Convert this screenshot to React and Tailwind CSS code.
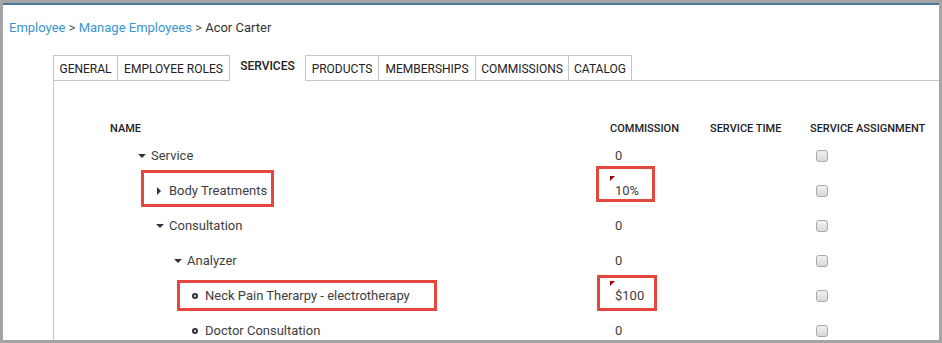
import React from "react";

const tabs = [
  { label: "GENERAL", w: "w-[64px]" },
  { label: "EMPLOYEE ROLES", w: "w-[112px]" },
  { label: "SERVICES", w: "w-[76px]", active: true },
  { label: "PRODUCTS", w: "w-[73px]" },
  { label: "MEMBERSHIPS", w: "w-[97px]" },
  { label: "COMMISSIONS", w: "w-[93px]" },
  { label: "CATALOG", w: "w-[64px]", last: true },
];

const rows = [
  { name: "Service", level: 0, icon: "down", commission: "0" },
  { name: "Body Treatments", level: 1, icon: "right", commission: "10%", flag: true },
  { name: "Consultation", level: 1, icon: "down", commission: "0" },
  { name: "Analyzer", level: 2, icon: "down", commission: "0" },
  { name: "Neck Pain Therarpy - electrotherapy", level: 3, icon: "dot", commission: "$100", flag: true },
  { name: "Doctor Consultation", level: 3, icon: "dot", commission: "0" },
];

const indents = ["ml-[28px]", "ml-[46px]", "ml-[64px]", "ml-[82px]"];

const TreeIcon = ({ type }) => {
  if (type === "down") {
    return (
      <span className="w-0 h-0 border-l-[4px] border-r-[4px] border-t-[4px] border-l-transparent border-r-transparent border-t-[#333]" />
    );
  }
  if (type === "right") {
    return (
      <span className="ml-[1px] w-0 h-0 border-t-[4px] border-b-[4px] border-l-[4px] border-t-transparent border-b-transparent border-l-[#333]" />
    );
  }
  return <span className="w-[6px] h-[6px] rounded-full border-[2px] border-[#333]" />;
};

const Checkbox = () => (
  <span className="block w-[12px] h-[12px] rounded-[3px] border border-[#a8a8a8] bg-gradient-to-b from-[#f2f2f2] to-[#d9d9d9]" />
);

const App = () => {
  return (
    <div
      className="relative w-[942px] h-[343px] overflow-hidden bg-[#a4a4a4] pt-[3px] pl-[3px] pr-[3px] pb-[3px]"
      style={{ fontFamily: "Roboto, 'Liberation Sans', sans-serif" }}
    >
      <div className="h-[337px] bg-white border-t-2 border-[#477a98] overflow-hidden">
        <div className="pt-[15px] pl-[6px] text-[13px] leading-[16px]">
          <span className="text-[#3a96cf]">Employee</span>
          <span className="text-[#555]"> &gt; </span>
          <span className="text-[#3a96cf]">Manage Employees</span>
          <span className="text-[#555]"> &gt; </span>
          <span className="text-[#333]">Acor Carter</span>
        </div>

        <div className="ml-[50px] mt-[19px] flex border-b border-[#c6c6c6]">
          {tabs.map((t) => (
            <div
              key={t.label}
              className={`${t.w} h-[26px] -mb-[1px] flex items-center justify-center text-[12px] text-[#222] border-l border-[#c6c6c6] ${
                t.active ? "bg-white pb-[4px] font-medium" : "border-t pt-[1px]"
              } ${t.last ? "border-r" : ""}`}
            >
              {t.label}
            </div>
          ))}
        </div>

        <div className="ml-[50px] h-[260px] border-l border-[#c6c6c6] pt-[39px] pl-[56px]">
          <div className="flex h-[18px] items-center text-[11px] font-medium text-[#222]">
            <div className="w-[500px]">NAME</div>
            <div className="w-[100px]">COMMISSION</div>
            <div className="w-[100px]">SERVICE TIME</div>
            <div>SERVICE ASSIGNMENT</div>
          </div>
          {rows.map((r) => (
            <div key={r.name} className="flex h-[35px] items-center text-[13px] text-[#3e3e3e]">
              <div className="w-[500px] flex items-center">
                <span className={`${indents[r.level]} w-[13px] flex items-center`}>
                  <TreeIcon type={r.icon} />
                </span>
                <span>{r.name}</span>
              </div>
              <div className="relative w-[100px] pl-[5px]">
                {r.flag && (
                  <span className="absolute left-0 -top-[5px] w-0 h-0 border-t-[5px] border-r-[5px] border-t-[#a40000] border-r-transparent" />
                )}
                {r.commission}
              </div>
              <div className="w-[100px]" />
              <div className="pl-[6px]">
                <Checkbox />
              </div>
            </div>
          ))}
        </div>
      </div>

      {/* annotation boxes */}
      <div className="absolute left-[141px] top-[170px] w-[133px] h-[37px] border-[3px] border-[#e5473e]" />
      <div className="absolute left-[596px] top-[166px] w-[59px] h-[36px] border-[3px] border-[#e5473e]" />
      <div className="absolute left-[177px] top-[280px] w-[260px] h-[31px] border-[3px] border-[#e5473e]" />
      <div className="absolute left-[597px] top-[275px] w-[60px] h-[36px] border-[3px] border-[#e5473e]" />
    </div>
  );
};

export default App;
